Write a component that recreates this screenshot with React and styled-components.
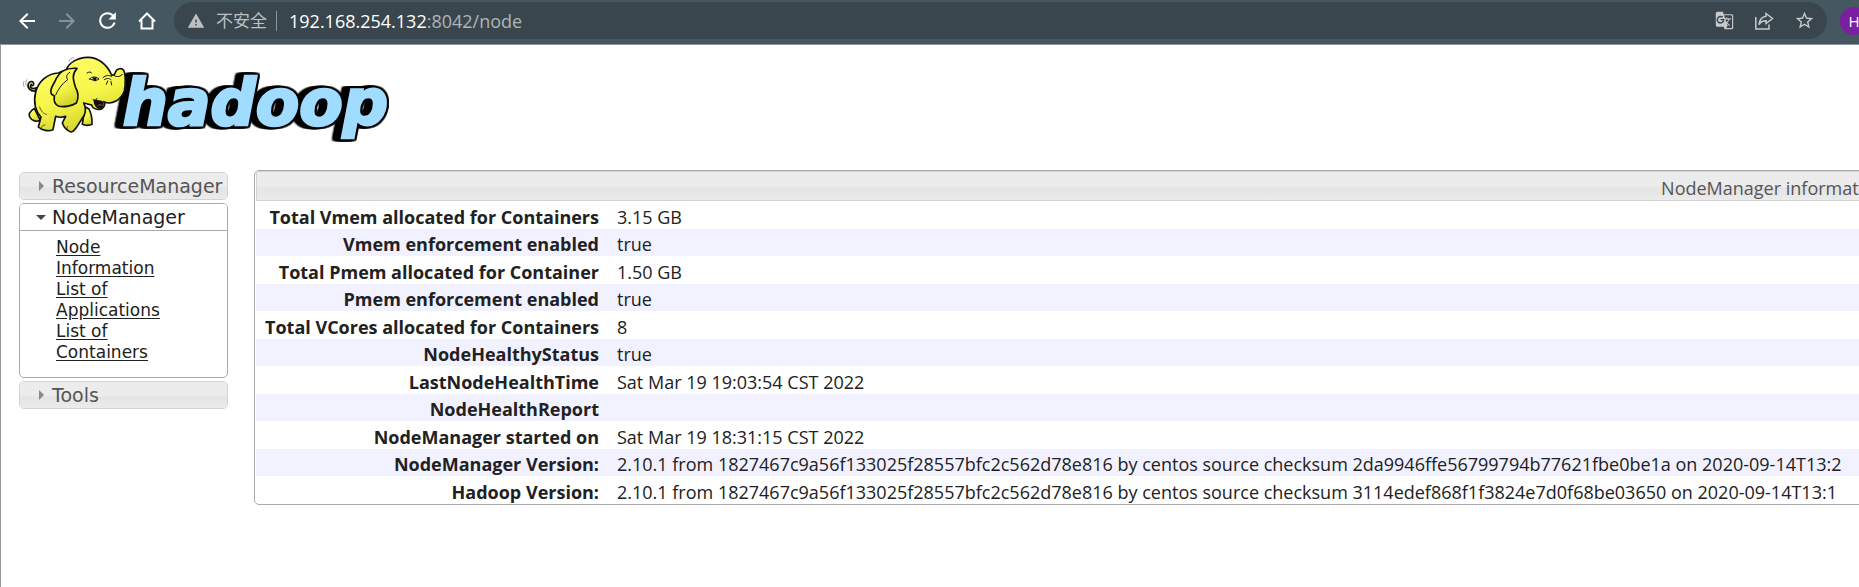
import React, { useState } from "react";
import styled, { createGlobalStyle } from "styled-components";
import {
  MdArrowBack,
  MdArrowForward,
  MdRefresh,
  MdWarning,
  MdStarBorder,
  MdGTranslate,
} from "react-icons/md";

const nodeInfo = [
  ["Total Vmem allocated for Containers", "3.15 GB"],
  ["Vmem enforcement enabled", "true"],
  ["Total Pmem allocated for Container", "1.50 GB"],
  ["Pmem enforcement enabled", "true"],
  ["Total VCores allocated for Containers", "8"],
  ["NodeHealthyStatus", "true"],
  ["LastNodeHealthTime", "Sat Mar 19 19:03:54 CST 2022"],
  ["NodeHealthReport", ""],
  ["NodeManager started on", "Sat Mar 19 18:31:15 CST 2022"],
  [
    "NodeManager Version:",
    "2.10.1 from 1827467c9a56f133025f28557bfc2c562d78e816 by centos source checksum 2da9946ffe56799794b77621fbe0be1a on 2020-09-14T13:2",
  ],
  [
    "Hadoop Version:",
    "2.10.1 from 1827467c9a56f133025f28557bfc2c562d78e816 by centos source checksum 3114edef868f1f3824e7d0f68be03650 on 2020-09-14T13:1",
  ],
];

const HomeIcon = () => (
  <svg width="20" height="20" viewBox="0 0 20 20" fill="none" stroke="currentColor" strokeWidth="2">
    <path d="M2 10.5 L10 2.5 L18 10.5 M4.5 9 V17.5 H15.5 V9" />
  </svg>
);

const ShareIcon = () => (
  <svg width="20" height="20" viewBox="0 0 20 20" fill="none" stroke="currentColor" strokeWidth="1.5">
    <path d="M1.8 6 V18 H15 V13.5" />
    <path d="M12 2.5 L18.5 7.5 L12 12.5 V9.8 C8.5 9.8 6.5 11 5 13.5 C5.5 9 8 5.8 12 5.2 Z" />
  </svg>
);

const HadoopLogo = () => (
  <LogoDrawing viewBox="24 15 1140 285" role="img" aria-label="hadoop">
    <defs>
      <linearGradient id="skin" x1="0" y1="0" x2="0.4" y2="1">
        <stop offset="0" stopColor="#ffff70" />
        <stop offset="0.6" stopColor="#f6f64a" />
        <stop offset="1" stopColor="#d5d52e" />
      </linearGradient>
    </defs>
    <Wordmark x="335" y="241">hadoop</Wordmark>
    <g stroke="#111111" strokeWidth="5" strokeLinejoin="round" strokeLinecap="round" fill="url(#skin)">
      <path d="M74 138 C58 140 48 128 52 117 C56 106 68 108 68 117 C68 124 60 122 61 118 C54 128 64 134 76 128 Z" />
      <path d="M70 190 C58 198 52 208 56 216 C62 228 78 232 88 226 Z" />
      <path d="M222 185 L214 238 C222 242 236 242 243 238 C244 222 240 204 234 192 Z" />
      <path d="M142 84 C110 86 82 108 74 142 C66 172 74 200 90 216 L82 246 C92 256 114 260 126 254 L134 214 C146 218 156 217 164 214 L154 234 C160 250 170 258 180 261 C188 262 190 254 196 248 L220 210 C225 198 224 186 218 174 L242 180 C244 194 270 198 278 186 C282 180 282 174 278 170 C304 182 330 164 340 138 C344 118 344 88 338 76 C332 68 318 70 314 80 C312 88 308 92 302 90 C286 54 256 36 230 37 C200 38 174 52 166 74 C156 78 148 82 142 84 Z" />
      <path d="M198 70 C170 68 146 78 136 100 C128 120 116 130 120 144 C122 152 130 150 130 154 C128 168 132 178 142 183 C160 188 184 182 196 174 C204 160 202 140 194 128 C188 108 180 90 198 70 Z" />
      <path d="M176 82 C164 90 166 98 170 104 C152 116 140 136 134 150" fill="none" strokeWidth="3" />
      <path d="M250 166 C252 188 264 192 274 186 C276 180 276 174 272 170 Z" fill="#111111" />
      <path d="M260 182 C264 178 270 178 274 182" fill="none" stroke="#d33b2c" strokeWidth="3" />
      <path d="M246 164 C252 168 256 166 258 160 M228 84 C234 80 240 80 242 84 M276 98 C284 90 294 90 302 94 M280 104 C286 100 294 98 300 104 M290 108 L286 118 M300 110 L302 120 M310 92 C318 98 330 94 334 88" fill="none" strokeWidth="3" />
      <path d="M236 102 C242 94 256 94 264 102 C256 108 248 106 236 102 Z" fill="#ffffff" strokeWidth="3" />
      <path d="M246 98 L256 98 L254 108 L248 106 Z" fill="#111111" strokeWidth="2" />
      <path d="M102 240 C94 240 90 246 92 250 M170 244 C166 248 168 254 172 256 M86 186 C90 200 98 206 106 208" fill="none" strokeWidth="2" />
    </g>
    <g fill="none" stroke="#777777" strokeWidth="2">
      <path d="M174 50 C176 42 182 38 190 38 M180 54 C182 50 186 46 190 45" />
      <path d="M40 126 C36 118 36 112 40 108 M46 122 C42 114 46 104 50 102" />
    </g>
  </LogoDrawing>
);

const App = () => {
  const [path, setPath] = useState(":8042/node");

  return (
    <>
      <GlobalStyle />
      <Browser>
        <Toolbar>
          <NavButtons>
            <IconButton aria-label="Back"><MdArrowBack size={24} /></IconButton>
            <IconButton aria-label="Forward" $dim><MdArrowForward size={24} /></IconButton>
            <IconButton aria-label="Reload"><MdRefresh size={25} /></IconButton>
            <IconButton aria-label="Home"><HomeIcon /></IconButton>
          </NavButtons>
          <AddressBar>
            <MdWarning size={18} />
            <Security>不安全</Security>
            <Host htmlFor="address">192.168.254.132</Host>
            <AddressInput id="address" value={path} onChange={(e) => setPath(e.target.value)} />
            <BarActions>
              <BarButton aria-label="Translate"><MdGTranslate size={19} /></BarButton>
              <BarButton aria-label="Share"><ShareIcon /></BarButton>
              <BarButton aria-label="Bookmark"><MdStarBorder size={21} /></BarButton>
            </BarActions>
          </AddressBar>
          <Avatar aria-label="Profile">H</Avatar>
        </Toolbar>

        <Page>
          <HadoopLogo />
          <Columns>
            <Sidebar>
              <Section>
                <SectionHeader><Arrow />ResourceManager</SectionHeader>
              </Section>
              <Section $open>
                <SectionHeader $open><Arrow $open />NodeManager</SectionHeader>
                <LinkList>
                  <li><a href="#node">Node Information</a></li>
                  <li><a href="#applications">List of Applications</a></li>
                  <li><a href="#containers">List of Containers</a></li>
                </LinkList>
              </Section>
              <Section>
                <SectionHeader><Arrow />Tools</SectionHeader>
              </Section>
            </Sidebar>
            <Content>
              <InfoTable>
                <colgroup>
                  <LabelCol />
                  <col />
                </colgroup>
                <thead>
                  <tr>
                    <TitleCell colSpan={2}>NodeManager information</TitleCell>
                  </tr>
                </thead>
                <tbody>
                  {nodeInfo.map(([label, value]) => (
                    <InfoRow key={label}>
                      <th scope="row">{label}</th>
                      <td>{value}</td>
                    </InfoRow>
                  ))}
                </tbody>
              </InfoTable>
            </Content>
          </Columns>
        </Page>
      </Browser>
    </>
  );
};

export default App;

const GlobalStyle = createGlobalStyle`
  * {
    box-sizing: border-box;
  }

  body {
    margin: 0;
    background: #ffffff;
    color: #212121;
    font-family: "Open Sans", "Noto Sans CJK SC", sans-serif;
    overflow: hidden;
  }

  button {
    border: 0;
    padding: 0;
    background: none;
    font-family: inherit;
    cursor: pointer;
  }
`;

const Browser = styled.div`
  min-height: 100vh;
  display: flex;
  flex-direction: column;
  overflow: hidden;
`;

const Toolbar = styled.header`
  height: 45px;
  display: flex;
  align-items: center;
  padding: 0 0 3px 7px;
  background: #455760;
  border-bottom: 1px solid #8f999e;
`;

const NavButtons = styled.nav`
  display: flex;
`;

const IconButton = styled.button`
  width: 40px;
  height: 36px;
  display: flex;
  align-items: center;
  justify-content: center;
  color: ${(p) => (p.$dim ? "#87939a" : "#ffffff")};
`;

const AddressBar = styled.div`
  flex: 1;
  height: 37px;
  display: flex;
  align-items: center;
  margin: 0 13px 0 7px;
  padding: 0 12px 0 13px;
  border-radius: 19px;
  background: #39464d;
  color: #bdc1c4;
  font-size: 18px;

  & > svg {
    flex: none;
  }
`;

const Security = styled.span`
  margin-left: 11px;
  padding-right: 9px;
  border-right: 1px solid #8b9498;
  font-size: 17px;
  line-height: 20px;
`;

const Host = styled.label`
  margin-left: 12px;
  color: #ffffff;
`;

const AddressInput = styled.input`
  flex: 1;
  min-width: 0;
  padding: 0;
  border: 0;
  outline: 0;
  background: none;
  color: #aeb5b8;
  font: inherit;
`;

const BarActions = styled.div`
  display: flex;
`;

const BarButton = styled.button`
  width: 40px;
  height: 36px;
  display: flex;
  align-items: center;
  justify-content: center;
  color: #c6cacc;

  &:last-child {
    width: 22px;
    margin-left: 9px;
  }
`;

const Avatar = styled.button`
  flex: none;
  width: 28px;
  height: 28px;
  margin-right: -9px;
  border-radius: 50%;
  background: #7b1fa2;
  color: #ffffff;
  font-size: 15px;
`;

const Page = styled.main`
  flex: 1;
  padding: 5px 0 0 18px;
  border-left: 1px solid #9a9a9a;
`;

const LogoDrawing = styled.svg`
  display: block;
  width: 380px;
  height: 95px;
`;

/* black outline on four sides, then the block shadow to the left */
const Wordmark = styled.text`
  font-family: "DejaVu Sans", sans-serif;
  font-size: 190px;
  font-weight: bold;
  font-style: oblique;
  fill: #a0dcff;
  stroke: #a0dcff;
  stroke-width: 8px;
  filter: drop-shadow(5px 0 0 #000000) drop-shadow(-5px 0 0 #000000)
    drop-shadow(0 5px 0 #000000) drop-shadow(0 -5px 0 #000000)
    drop-shadow(-10px 0 0 #000000) drop-shadow(-10px 0 0 #000000);
`;

const Columns = styled.div`
  display: flex;
  align-items: flex-start;
  gap: 26px;
  margin-top: 25px;
`;

const Sidebar = styled.aside`
  flex: none;
  width: 209px;
  display: flex;
  flex-direction: column;
  gap: 3px;
  padding-top: 2px;
  font-family: "DejaVu Sans", sans-serif;
`;

const Section = styled.section`
  border: 1px solid ${(p) => (p.$open ? "#aaaaaa" : "#d3d3d3")};
  border-radius: 5px;
  overflow: hidden;
`;

const SectionHeader = styled.button`
  width: 100%;
  height: ${(p) => (p.$open ? 27 : 26)}px;
  display: flex;
  align-items: center;
  padding: 0 0 0 16px;
  border-bottom: ${(p) => (p.$open ? "1px solid #aaaaaa" : "0")};
  background: ${(p) =>
    p.$open
      ? "#ffffff"
      : "linear-gradient(#ececec 0 50%, #e4e4e4 58%, #ebebeb)"};
  color: ${(p) => (p.$open ? "#212121" : "#555555")};
  font-size: 19px;
  line-height: 26px;
  white-space: nowrap;
`;

const Arrow = styled.span`
  flex: none;
  width: 16px;
  display: flex;

  &::before {
    content: "";
    margin-left: ${(p) => (p.$open ? 0 : 3)}px;
    border-style: solid;
    border-color: transparent;
    border-width: ${(p) => (p.$open ? "5px 5px 0" : "5px 0 5px 5px")};
    ${(p) => (p.$open ? "border-top-color: #454545" : "border-left-color: #888888")};
  }
`;

const LinkList = styled.ul`
  margin: 0;
  padding: 6px 50px 14px 36px;
  list-style: none;
  font-size: 17px;
  line-height: 21px;

  a {
    color: #212121;
    text-underline-offset: 2px;
  }
`;

const Content = styled.section`
  flex: none;
  width: calc(163vw + 8px);
  border: 1px solid #aaaaaa;
  border-radius: 5px;
  padding: 0 1px;
`;

const InfoTable = styled.table`
  width: 100%;
  table-layout: fixed;
  border-collapse: separate;
  border-spacing: 0;
  font-size: 18px;
  line-height: 24px;
`;

const LabelCol = styled.col`
  width: 352px;
`;

const TitleCell = styled.th`
  height: 30px;
  padding: 3px 0 0;
  border: 1px solid #d3d3d3;
  background: linear-gradient(#ececec 0 50%, #e4e4e4 58%, #ebebeb);
  color: #555555;
  font-weight: normal;
`;

const InfoRow = styled.tr`
  height: 28px;

  &:nth-child(even) {
    height: 27px;
    background: #f1f1ff;
  }

  th,
  td {
    padding: 3px 9px 0;
    white-space: nowrap;
  }

  th {
    text-align: right;
    font-weight: 700;
  }
`;
